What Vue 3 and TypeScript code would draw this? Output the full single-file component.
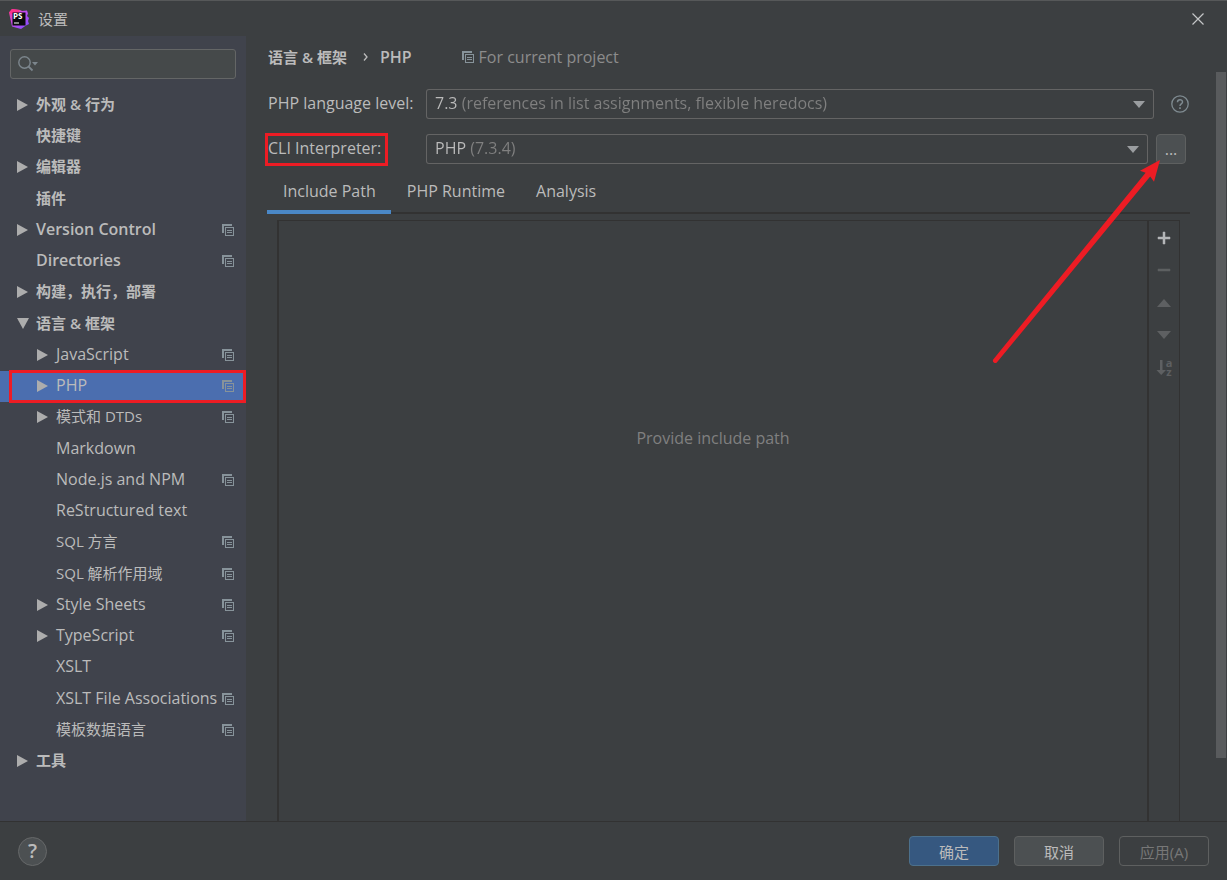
<script setup lang="ts">
import { ref } from 'vue'

interface TreeItem {
  label: string
  depth: 0 | 1
  bold?: boolean
  arrow?: 'right' | 'down'
  project?: boolean
}

const items: TreeItem[] = [
  { label: '外观 & 行为', depth: 0, bold: true, arrow: 'right' },
  { label: '快捷键', depth: 0, bold: true },
  { label: '编辑器', depth: 0, bold: true, arrow: 'right' },
  { label: '插件', depth: 0, bold: true },
  { label: 'Version Control', depth: 0, bold: true, arrow: 'right', project: true },
  { label: 'Directories', depth: 0, bold: true, project: true },
  { label: '构建，执行，部署', depth: 0, bold: true, arrow: 'right' },
  { label: '语言 & 框架', depth: 0, bold: true, arrow: 'down' },
  { label: 'JavaScript', depth: 1, arrow: 'right', project: true },
  { label: 'PHP', depth: 1, arrow: 'right', project: true },
  { label: '模式和 DTDs', depth: 1, arrow: 'right', project: true },
  { label: 'Markdown', depth: 1 },
  { label: 'Node.js and NPM', depth: 1, project: true },
  { label: 'ReStructured text', depth: 1 },
  { label: 'SQL 方言', depth: 1, project: true },
  { label: 'SQL 解析作用域', depth: 1, project: true },
  { label: 'Style Sheets', depth: 1, arrow: 'right', project: true },
  { label: 'TypeScript', depth: 1, arrow: 'right', project: true },
  { label: 'XSLT', depth: 1 },
  { label: 'XSLT File Associations', depth: 1, project: true },
  { label: '模板数据语言', depth: 1, project: true },
  { label: '工具', depth: 0, bold: true, arrow: 'right' },
]

const tabs = ['Include Path', 'PHP Runtime', 'Analysis']
const selected = ref('PHP')
const activeTab = ref(tabs[0])
const query = ref('')

const isLatin = (text: string): boolean => /^[\x20-\x7e]+$/.test(text)
</script>

<template>
  <div class="window">
    <header class="titlebar">
      <svg class="logo" viewBox="0 0 20 20" aria-hidden="true">
        <defs>
          <linearGradient id="ps-left" x1="0" y1="0" x2="1" y2="1">
            <stop offset="0" stop-color="#ff3a8c" />
            <stop offset="0.45" stop-color="#c44bf0" />
            <stop offset="1" stop-color="#7b4dff" />
          </linearGradient>
        </defs>
        <path d="M0 3.500 3 0 11 1 13 2 18 1.500 19 4.500 18 7 20 9 19 12 20 15 17 16.500 12 20 3 17.500Z" fill="url(#ps-left)" />
        <path d="M3 0 11 1 9 4 3 5 0 3.500Z" fill="#ff318c" />
        <rect x="3.500" y="3.500" width="13" height="13" fill="#0a0a0c" />
        <text x="4" y="10" class="logo-text">PS</text>
        <rect x="5" y="13.500" width="5" height="1" fill="#fff" />
      </svg>
      <h1 class="title">设置</h1>
      <button class="close" type="button" aria-label="关闭">
        <svg viewBox="0 0 12 12"><path d="M0.500 0.500 11.500 11.500M11.500 0.500 0.500 11.500" stroke="#c4c6c7" stroke-width="1.200" /></svg>
      </button>
    </header>

    <div class="body">
      <aside class="sidebar">
        <label class="search">
          <svg viewBox="0 0 20 16" aria-hidden="true">
            <circle cx="6.500" cy="6.500" r="5.700" fill="none" stroke="#7c868d" stroke-width="1.400" />
            <path d="M10.500 10.500 14.500 14.500" stroke="#7c868d" stroke-width="1.800" />
            <path d="M14 6H20L17 9.500Z" fill="#7c868d" />
          </svg>
          <input v-model="query" type="text" aria-label="搜索" />
        </label>
        <nav class="tree">
          <button
            v-for="item in items"
            :key="item.label"
            type="button"
            class="row"
            :class="{ child: item.depth === 1, bold: item.bold, selected: selected === item.label }"
            @click="selected = item.label"
          >
            <span class="twist">
              <svg v-if="item.arrow === 'right'" viewBox="0 0 12 12"><path d="M0 0 11 6 0 12Z" /></svg>
              <svg v-else-if="item.arrow === 'down'" viewBox="0 0 12 12"><path d="M0 0H12L6 11Z" /></svg>
            </span>
            <span class="name" :class="{ latin: isLatin(item.label) }">{{ item.label }}</span>
            <svg v-if="item.project" class="project" viewBox="0 0 12 12">
              <path d="M0 0H10V2H2V9H0Z" /><path fill-rule="evenodd" d="M3 3H12V12H3ZM4 4V11H11V4Z" /><path d="M5 6H10V7H5ZM5 8H10V9H5Z" />
            </svg>
          </button>
        </nav>
      </aside>

      <main class="main">
        <div class="crumbs">
          <span class="crumb">语言 &amp; 框架</span>
          <svg class="sep" viewBox="0 0 5 8"><path d="M1 0.500 4 4 1 7.500" fill="none" stroke="#bbb" stroke-width="1.300" /></svg>
          <span class="crumb latin">PHP</span>
          <span class="scope latin">
            <svg class="project" viewBox="0 0 12 12">
              <path d="M0 0H10V2H2V9H0Z" /><path fill-rule="evenodd" d="M3 3H12V12H3ZM4 4V11H11V4Z" /><path d="M5 6H10V7H5ZM5 8H10V9H5Z" />
            </svg>
            For current project
          </span>
        </div>

        <div class="form latin">
          <div class="field">
            <label for="level">PHP language level:</label>
            <span class="combo">
              <select id="level" class="level"><option>7.3 (references in list assignments, flexible heredocs)</option></select>
              <svg viewBox="0 0 12 7"><path d="M0 0H12L6 7Z" fill="#9a9da0" /></svg>
            </span>
            <button class="hint" type="button" aria-label="帮助">
              <svg viewBox="0 0 18 18" fill="none" stroke="#7f8b91" stroke-width="1.300">
                <circle cx="9" cy="9" r="8.200" /><path d="M6.500 7.200C6.500 3.800 11.500 3.900 11.500 7 11.500 9 9 8.900 9 11" stroke-width="1.500" /><path d="M9 12.300V14" stroke-width="1.600" />
              </svg>
            </button>
          </div>
          <div class="field">
            <label for="cli" class="marked">CLI Interpreter:</label>
            <span class="combo">
              <select id="cli" class="cli"><option>PHP (7.3.4)</option></select>
              <svg viewBox="0 0 12 7"><path d="M0 0H12L6 7Z" fill="#9a9da0" /></svg>
            </span>
            <button class="browse" type="button">...</button>
          </div>
        </div>

        <div class="tabs latin" role="tablist">
          <button
            v-for="tab in tabs"
            :key="tab"
            type="button"
            role="tab"
            :aria-selected="activeTab === tab"
            :class="{ active: activeTab === tab }"
            @click="activeTab = tab"
          >{{ tab }}</button>
        </div>

        <section class="paths">
          <div class="list latin"><p>Provide include path</p></div>
          <div class="tools">
            <button type="button" aria-label="添加"><svg viewBox="0 0 16 16"><path d="M7 2H9V7H14V9H9V14H7V9H2V7H7Z" fill="#b4b6b8" stroke="#b4b6b8" stroke-width="0.500" /></svg></button>
            <button type="button" disabled aria-label="移除"><svg viewBox="0 0 16 16"><path d="M2 7H14V9H2Z" stroke="#5e6062" stroke-width="0.500" /></svg></button>
            <button type="button" disabled aria-label="上移"><svg viewBox="0 0 16 16"><path d="M1 13H15L8 5Z" /></svg></button>
            <button type="button" disabled aria-label="下移"><svg viewBox="0 0 16 16"><path d="M1 5H15L8 13Z" /></svg></button>
            <button type="button" disabled aria-label="排序" class="sort">
              <svg viewBox="0 0 10 16"><path d="M4 1H6.500V11H10L5.200 16 0.500 11H4Z" /></svg>
              <span class="az"><span>a</span><span>z</span></span>
            </button>
          </div>
        </section>
        <div class="scrollbar"></div>
        <svg class="pointer" viewBox="0 0 172 208" aria-hidden="true">
          <path d="M1.200 203.500 153.600 16.700 148 14.700 168 4 162 25.700 158.200 20.500 4.800 206.500A2.400 2.400 0 0 1 1.200 203.500Z" />
        </svg>
      </main>
    </div>

    <footer class="footer">
      <button class="help" type="button" aria-label="帮助">?</button>
      <button class="action primary" type="button">确定</button>
      <button class="action" type="button">取消</button>
      <button class="action" type="button" disabled>应用(A)</button>
    </footer>
  </div>
</template>

<style>
body {
  margin: 0;
  background: #3c3f41;
}
</style>

<style scoped>
.window {
  box-sizing: border-box;
  display: flex;
  flex-direction: column;
  min-height: 100vh;
  border-top: 1px solid #565859;
  background: #3c3f41;
  color: #bbbbbb;
  font: 15px/20px "Open Sans", "Noto Sans CJK SC", sans-serif;
}
.latin {
  font-size: 16px;
}
button,
input,
select {
  box-sizing: border-box;
  margin: 0;
  padding: 0;
  border: 0;
  background: none;
  color: inherit;
  font: inherit;
}
svg {
  display: block;
  flex: none;
}
.titlebar {
  display: flex;
  align-items: center;
  height: 35px;
  padding: 0 23px 0 9px;
}
.logo {
  width: 20px;
  height: 20px;
}
.logo-text {
  font: bold 8px "Open Sans", sans-serif;
  fill: #fff;
}
.title {
  flex: 1;
  margin: 0 0 0 9px;
  font-size: 15px;
  font-weight: 400;
}
.close svg {
  width: 12px;
  height: 12px;
}
.body {
  display: flex;
  flex: 1;
}
.sidebar {
  box-sizing: border-box;
  flex: none;
  width: 246px;
  padding-top: 13px;
  background: #40434c;
}
.search {
  box-sizing: border-box;
  display: flex;
  align-items: center;
  height: 30px;
  margin: 0 10px 11px;
  padding: 0 7px;
  border: 1px solid #646666;
  border-radius: 3px;
  background: #45494a;
}
.search svg {
  width: 20px;
  height: 16px;
}
.search input {
  flex: 1;
  min-width: 0;
  outline: none;
}
.tree {
  display: flex;
  flex-direction: column;
}
.row {
  display: flex;
  align-items: center;
  height: 31px;
  padding: 0 12px 2px 17px;
  text-align: left;
}
.row:nth-child(4n + 3) {
  height: 32px;
}
.row.child {
  padding-left: 37px;
}
.row.bold {
  font-weight: 600;
}
.row.selected {
  position: relative;
  background: #4b6eaf;
}
.row.selected::after {
  content: "";
  position: absolute;
  inset: -1px 0 -1px 9px;
  border: 3px solid #ed1c24;
}
.twist {
  flex: none;
  width: 19px;
}
.twist svg {
  width: 12px;
  height: 12px;
  fill: #adadad;
}
.name {
  flex: 1;
  padding-bottom: 2px;
  white-space: nowrap;
}
.project {
  width: 12px;
  height: 12px;
  fill: #87939a;
}
.main {
  position: relative;
  display: flex;
  flex: 1;
  flex-direction: column;
  min-width: 0;
  padding: 10px 37px 0 21px;
}
.crumbs {
  display: flex;
  align-items: center;
  height: 22px;
  padding-left: 1px;
}
.crumb {
  font-weight: 600;
}
.sep {
  width: 5px;
  height: 8px;
  margin: 0 12px 0 16px;
}
.scope {
  display: flex;
  align-items: center;
  gap: 5px;
  margin-left: 50px;
  color: #8c8c8c;
}
.form {
  display: grid;
  gap: 15px;
  margin: 21px 4px 0 1px;
}
.field {
  display: flex;
  align-items: center;
  height: 30px;
}
.field label {
  flex: none;
  width: 158px;
  padding-bottom: 2px;
}
.field .marked {
  position: relative;
}
.marked::after {
  content: "";
  position: absolute;
  inset: -5px 38px -6px -3px;
  border: 3px solid #ed1c24;
}
.combo {
  position: relative;
  flex: 1;
  height: 30px;
  border-radius: 3px;
  box-shadow: inset 0 0 0 1px #646464;
}
.combo select {
  width: 100%;
  height: 30px;
  padding: 0 32px 2px 9px;
  appearance: none;
  background-clip: text;
  color: transparent;
}
.combo .level {
  background-image: linear-gradient(90deg, #bbbbbb 34px, #808080 34px);
}
.combo .cli {
  background-image: linear-gradient(90deg, #bbbbbb 43px, #808080 43px);
}
.combo svg {
  position: absolute;
  top: 12px;
  right: 9px;
  width: 12px;
  height: 7px;
  pointer-events: none;
}
.hint {
  margin: 0 -3px 0 17px;
}
.hint svg {
  width: 18px;
  height: 18px;
}
.browse {
  width: 30px;
  height: 30px;
  margin-left: 8px;
  border: 1px solid #5e6060;
  border-radius: 4px;
  background: #4c5052;
}
.tabs {
  display: flex;
  height: 48px;
  border-bottom: 2px solid #323232;
}
.tabs button {
  height: 50px;
  padding: 8px 15px 0 16px;
  border-bottom: 4px solid transparent;
}
.tabs .active {
  border-bottom-color: #4a88c7;
}
.paths {
  display: grid;
  grid-template-columns: 1fr 30px;
  flex: 1;
  margin: 6px 10px 0;
  border-top: 1px solid #323232;
  border-right: 1px solid #323232;
}
.list {
  border: solid #323232;
  border-width: 0 2px;
  color: #808080;
  text-align: center;
}
.list p {
  margin: 207px 0 0;
}
.tools {
  display: flex;
  flex-direction: column;
  align-items: center;
  gap: 16px;
  padding-top: 9px;
}
.tools svg {
  width: 16px;
  height: 16px;
  fill: #5e6062;
}
.tools .sort {
  display: flex;
  align-items: center;
}
.tools .sort svg {
  width: 10px;
}
.az {
  display: grid;
  color: #5e6062;
  font-size: 11px;
  font-weight: 700;
  line-height: 9px;
}
.scrollbar {
  position: absolute;
  top: 36px;
  right: 1px;
  width: 10px;
  height: 686px;
  background: #595b5d;
}
.pointer {
  position: absolute;
  top: 120px;
  right: 63px;
  width: 172px;
  height: 208px;
  fill: #ed1c24;
  pointer-events: none;
}
.footer {
  display: flex;
  align-items: center;
  gap: 15px;
  height: 58px;
  padding: 0 18px;
  border-top: 1px solid #323232;
}
.help {
  width: 29px;
  height: 29px;
  margin-right: auto;
  border: 1px solid #666869;
  border-radius: 50%;
  background: #4c5052;
  font-size: 20px;
  font-weight: 600;
}
.action {
  width: 90px;
  height: 30px;
  padding-top: 2px;
  border: 1px solid #5e6060;
  border-radius: 4px;
  background: #4c5052;
}
.primary {
  border-color: #4c708c;
  background: #365880;
}
.action:disabled {
  background: none;
  color: #777777;
}
</style>
